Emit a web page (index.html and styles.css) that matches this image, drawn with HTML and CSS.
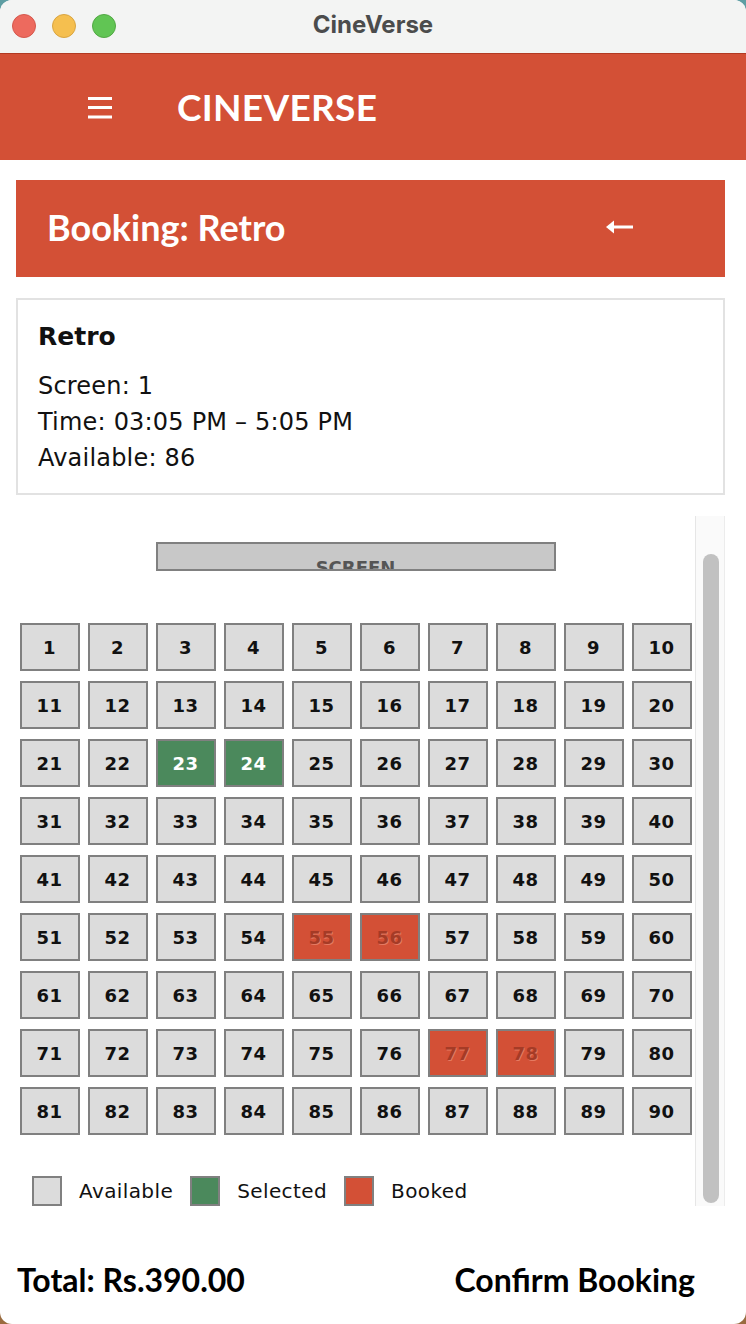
FILE: index.html
```html
<!DOCTYPE html>
<html lang="en">
<head>
<meta charset="utf-8">
<title>CineVerse</title>
<link rel="stylesheet" href="styles.css">
</head>
<body>
<div class="window">
  <div class="titlebar">
    <div class="lights">
      <span class="light red"></span>
      <span class="light yellow"></span>
      <span class="light green"></span>
    </div>
    <div class="title">CineVerse</div>
  </div>

  <header class="appbar">
    <svg class="menu" width="24" height="22" viewBox="0 0 24 22" aria-hidden="true">
      <rect x="0" y="0" width="24" height="3" fill="#fff"/>
      <rect x="0" y="9" width="24" height="3" fill="#fff"/>
      <rect x="0" y="18.5" width="24" height="3" fill="#fff"/>
    </svg>
    <div class="brand">CINEVERSE</div>
  </header>

  <main class="content">
    <div class="booking-bar">
      <h1 class="booking-title">Booking: Retro</h1>
      <svg class="back" width="27" height="16" viewBox="0 0 27 16" aria-hidden="true">
        <polygon points="0,8 8,1.5 8,14.5" fill="#fff"/>
        <rect x="7" y="6.5" width="20" height="3" fill="#fff"/>
      </svg>
    </div>

    <section class="info">
      <div class="info-title">Retro</div>
      <div class="info-line first">Screen: 1</div>
      <div class="info-line">Time: 03:05 PM – 5:05 PM</div>
      <div class="info-line">Available: 86</div>
    </section>

    <section class="scroll">
      <div class="scroll-body">
        <div class="screen"><span>SCREEN</span></div>
        <div class="seats" id="seats"></div>
        <div class="legend">
          <span class="legend-box available"></span><span class="legend-label">Available</span>
          <span class="legend-box selected"></span><span class="legend-label">Selected</span>
          <span class="legend-box booked"></span><span class="legend-label">Booked</span>
        </div>
      </div>
      <div class="scrollbar"><div class="thumb"></div></div>
    </section>
  </main>

  <footer class="bottom">
    <div class="total">Total: Rs.390.00</div>
    <div class="confirm">Confirm Booking</div>
  </footer>
</div>
<script src="script.js"></script>
</body>
</html>
```

FILE: script.js
```js
(function () {
  var grid = document.getElementById('seats');
  var selected = [23, 24];
  var booked = [55, 56, 77, 78];
  for (var i = 1; i <= 90; i++) {
    var b = document.createElement('div');
    b.className = 'seat';
    if (selected.indexOf(i) !== -1) b.className += ' seat-selected';
    if (booked.indexOf(i) !== -1) b.className += ' seat-booked';
    b.textContent = String(i);
    grid.appendChild(b);
  }
})();
```

FILE: styles.css
```css
* { box-sizing: border-box; }

html, body {
  margin: 0;
  padding: 0;
}

body {
  width: 746px;
  height: 1324px;
  background: linear-gradient(180deg, #5e9ea3 0%, #6f8f86 60%, #9a6b3f 100%);
  overflow: hidden;
}

.window {
  width: 746px;
  height: 1324px;
  background: #ffffff;
  border-radius: 12px;
  overflow: hidden;
  display: flex;
  flex-direction: column;
  font-family: "DejaVu Sans", "Noto Sans", sans-serif;
  color: #111;
}

/* ---------- title bar ---------- */
.titlebar {
  height: 54px;
  flex: 0 0 54px;
  background: #f3f4f3;
  border-bottom: 1px solid #b23a22;
  position: relative;
  display: flex;
  align-items: center;
  justify-content: center;
}

.lights {
  position: absolute;
  left: 12px;
  top: 14px;
  display: flex;
  gap: 16px;
}

.light {
  width: 24px;
  height: 24px;
  border-radius: 50%;
  display: block;
}
.light.red { background: #ed6a5e; border: 1px solid #d5584d; }
.light.yellow { background: #f5bf4f; border: 1px solid #d9a541; }
.light.green { background: #61c554; border: 1px solid #52a844; }

.title {
  font-family: Inter, "Noto Sans", sans-serif;
  font-weight: 700;
  font-size: 24px;
  color: #4b4c4c;
  margin-top: -4px;
}

/* ---------- app bar ---------- */
.appbar {
  height: 106px;
  flex: 0 0 106px;
  background: #d35036;
  display: flex;
  align-items: center;
  padding-left: 88px;
}

.menu { display: block; margin-top: 1px; }

.brand {
  margin-left: 65px;
  font-family: Lato, "Open Sans", sans-serif;
  font-weight: 700;
  font-size: 37px;
  color: #ffffff;
  letter-spacing: 0.3px;
  margin-top: -2px;
}

/* ---------- content ---------- */
.content {
  padding: 20px 21px 0 16px;
  display: flex;
  flex-direction: column;
}

.booking-bar {
  height: 97px;
  background: #d35036;
  display: flex;
  align-items: center;
  justify-content: space-between;
  padding: 0 92px 0 31px;
}

.booking-title {
  margin: -4px 0 0 0;
  font-family: Lato, "Open Sans", sans-serif;
  font-weight: 700;
  font-size: 36px;
  color: #ffffff;
}

.back { display: block; margin-top: -4px; }

.info {
  margin-top: 21px;
  height: 197px;
  border: 2px solid #e2e2e2;
  padding: 20px 21px 17px 20px;
  background: #fff;
}

.info-title {
  font-weight: 700;
  font-size: 25px;
  line-height: 34px;
}

.info-line {
  font-size: 24px;
  line-height: 36px;
  letter-spacing: 0.2px;
}
.info-line.first { margin-top: 14px; }

/* ---------- scroll area ---------- */
.scroll {
  margin-top: 21px;
  height: 690px;
  display: flex;
}

.scroll-body {
  flex: 1;
  padding-top: 26px;
  display: flex;
  flex-direction: column;
}

.screen {
  width: 400px;
  height: 29px;
  margin: 0 auto;
  background: #c8c8c8;
  border: 2px solid #808080;
  overflow: hidden;
  text-align: center;
  padding-top: 15px;
}
.screen span {
  display: block;
  font-weight: 700;
  font-size: 18px;
  line-height: 18px;
  color: #555555;
}

.seats {
  margin-top: 52px;
  display: grid;
  grid-template-columns: repeat(10, 60px);
  grid-auto-rows: 48px;
  column-gap: 8px;
  row-gap: 10px;
  justify-content: center;
}

.seat {
  background: #dcdcdc;
  border: 2px solid #808080;
  display: flex;
  align-items: center;
  justify-content: center;
  font-weight: 700;
  font-size: 18px;
  letter-spacing: 0.5px;
  color: #111;
}

.seat-selected {
  background: #4b895c;
  color: #ffffff;
}

.seat-booked {
  background: #d35036;
  color: #a53b26;
  text-shadow: 1px 1px 0 #e57a61;
}

.legend {
  margin-top: 41px;
  padding-left: 16px;
  display: flex;
  align-items: center;
}

.legend-box {
  width: 30px;
  height: 30px;
  border: 2px solid #808080;
  display: block;
}
.legend-box.available { background: #dcdcdc; }
.legend-box.selected { background: #4b895c; }
.legend-box.booked { background: #d35036; }

.legend-label {
  font-size: 20px;
  letter-spacing: 0.4px;
  margin-left: 17px;
  margin-right: 17px;
}

.scrollbar {
  width: 30px;
  flex: 0 0 30px;
  background: #fafafa;
  border-left: 1px solid #e6e6e6;
  border-right: 1px solid #ececec;
  padding: 38px 0 0 7px;
}

.thumb {
  width: 16px;
  height: 649px;
  background: #c1c1c1;
  border-radius: 8px;
}

/* ---------- bottom ---------- */
.bottom {
  flex: 1;
  display: flex;
  align-items: center;
  justify-content: space-between;
  padding: 28px 51px 0 17px;
  font-family: Lato, "Open Sans", sans-serif;
  font-weight: 700;
  font-size: 32px;
  color: #000;
}
```
